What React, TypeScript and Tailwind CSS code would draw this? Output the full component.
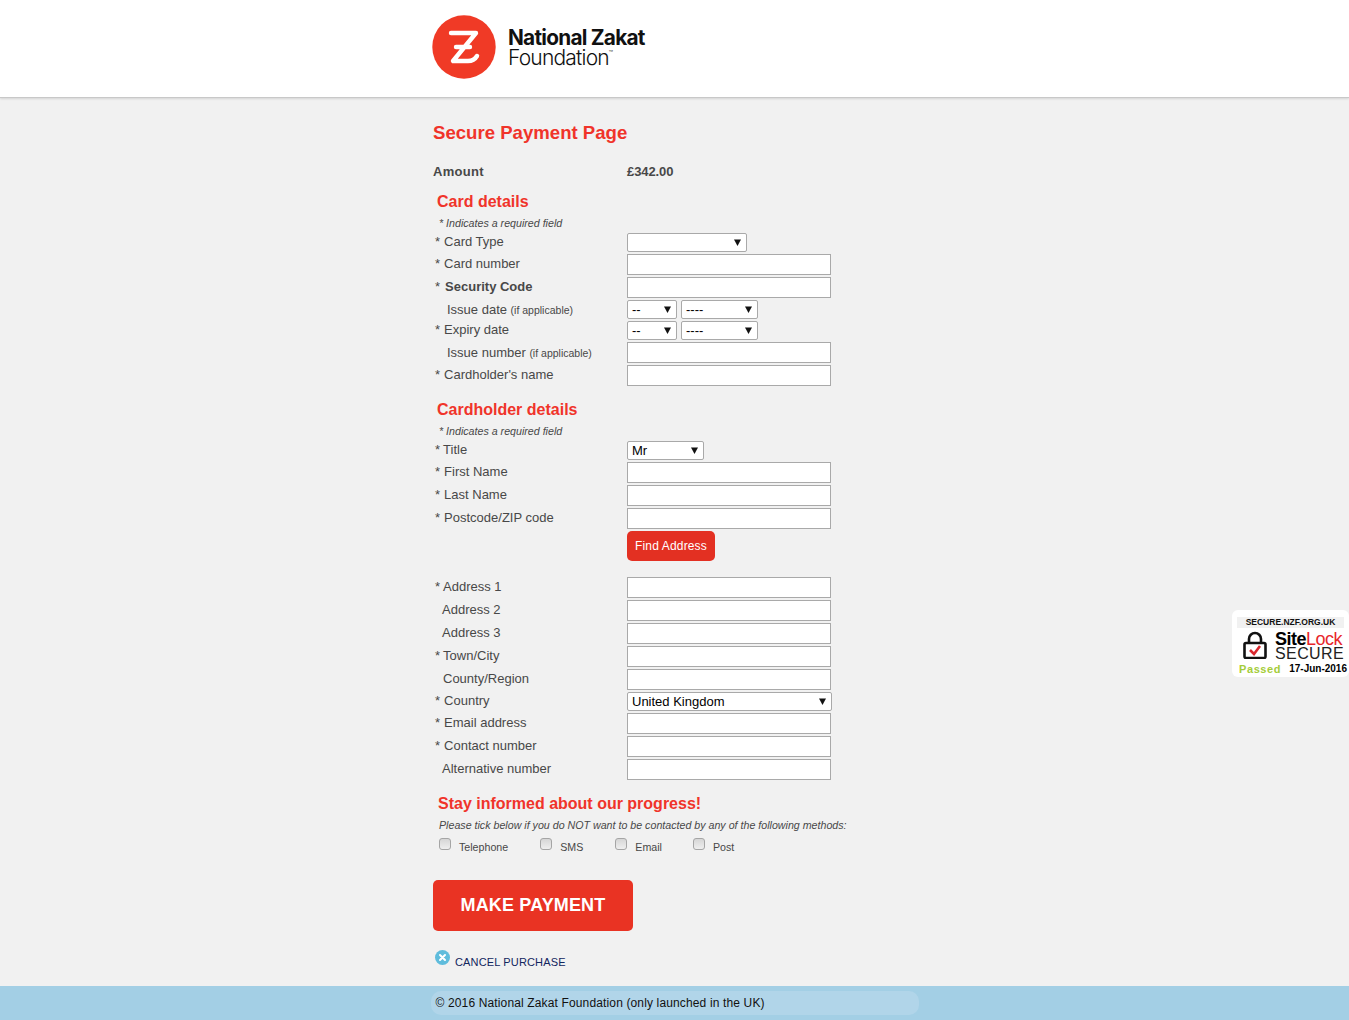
import type { ReactNode } from "react"

const arial = "font-['Liberation_Sans',Arial,sans-serif]"

function Logo() {
  return (
    <div className="-ml-px flex items-center gap-[12px]">
      <svg width="64" height="64" viewBox="0 0 64 64" className="shrink-0">
        <circle cx="32" cy="32" r="31.7" fill="#f03a26" />
        <path
          d="M19 18 H44 L21 46 H36 Q42 46 45 41 M24 32 H38"
          fill="none"
          stroke="#fff"
          strokeWidth="4.4"
          strokeLinecap="round"
          strokeLinejoin="round"
        />
      </svg>
      <div className="pt-[2px] font-['Inter',sans-serif] text-[#111]">
        <div className="text-[20.8px] leading-[19px] font-bold tracking-[-0.75px]">National Zakat</div>
        <div className="flex items-start text-[21px] leading-[21px] font-light tracking-[-0.8px]">
          Foundation<span className="mt-[3px] text-[7px] leading-[7px] tracking-normal">™</span>
        </div>
      </div>
    </div>
  )
}

function Row({ label, tight, children }: { label: ReactNode; tight?: boolean; children: ReactNode }) {
  return (
    <div className="flex items-start">
      <div className={`w-[194px] text-[13px] leading-[16px] text-[#484848] ${tight ? "pt-px" : "pt-[2px]"}`}>{label}</div>
      {children}
    </div>
  )
}

function TextBox() {
  return <input type="text" className="block h-[21px] w-[204px] border border-[#a9a9a9] bg-white" />
}

function Dropdown({ width, value }: { width: string; value: string }) {
  return (
    <div className={`flex h-[19px] items-center justify-between rounded-[2px] border border-[#a9a9a9] bg-white pr-[5px] pl-1 ${width}`}>
      <span className="text-[13px] leading-[17px] text-black">{value}</span>
      <svg width="7" height="7" viewBox="0 0 7 7">
        <path d="M0 0.5 H7 L3.5 7 Z" fill="#111" />
      </svg>
    </div>
  )
}

function Star({ text, gap = "pl-[4px]" }: { text: ReactNode; gap?: string }) {
  return (
    <div className="flex pl-[2px]">
      <span>*</span>
      <span className={gap}>{text}</span>
    </div>
  )
}

function Section({ title, top }: { title: string; top: string }) {
  return (
    <>
      <h2 className={`${top} pl-[4px] text-[16px] leading-[20px] font-bold text-[#f0342a]`}>{title}</h2>
      <p className="mt-[4px] mb-[2px] pl-[6px] text-[10.67px] leading-[15px] text-[#484848] italic">* Indicates a required field</p>
    </>
  )
}

function Tick({ label, gap }: { label: string; gap: string }) {
  return (
    <label className={`flex items-start ${gap}`}>
      <input
        type="checkbox"
        className="h-[12px] w-[12px] appearance-none rounded-[3px] border border-[#a5a5a5] bg-gradient-to-b from-[#d6d6d6] to-[#efefef]"
      />
      <span className="mt-[3px] ml-[8px] text-[10.67px] leading-[13px] text-[#484848]">{label}</span>
    </label>
  )
}

function SiteLock() {
  return (
    <div className="absolute top-[610px] right-0 h-[67px] w-[117px] rounded-[6px] bg-white">
      <div className="mx-[5px] mt-[7px] h-[11px] bg-[#f1f1f1] text-center text-[8.5px] leading-[11px] font-bold text-[#111]">
        SECURE.NZF.ORG.UK
      </div>
      <div className="mt-[3px] flex pl-[11px]">
        <svg width="24" height="28" viewBox="0 0 24 28">
          <path d="M6 12 V8 A6 6 0 0 1 18 8 V12" fill="none" stroke="#111" strokeWidth="2.6" />
          <rect x="1.5" y="12" width="21" height="15" rx="1.5" fill="#fff" stroke="#111" strokeWidth="2.6" />
          <path d="M7 19 L11 23 L17 15" fill="none" stroke="#d9272e" strokeWidth="2.6" />
        </svg>
        <div className="mt-px ml-[8px]">
          <div className="text-[18px] leading-[15px] font-bold tracking-[-0.5px] text-black">
            Site<span className="font-normal text-[#e8262a]">Lock</span>
          </div>
          <div className="text-[16px] leading-[14px] tracking-[0.4px] text-[#222]">SECURE</div>
        </div>
      </div>
      <div className="mt-[2px] flex items-center justify-between pr-[2px] pl-[7px]">
        <span className="text-[11px] leading-[12px] font-bold tracking-[0.6px] text-[#a5cd39]">Passed</span>
        <span className="text-[10px] leading-[12px] font-bold text-black">17-Jun-2016</span>
      </div>
    </div>
  )
}

export default function App() {
  return (
    <div className={`relative flex min-h-[1020px] flex-col bg-[#f1f1f1] ${arial}`}>
      <header className="h-[98px] border-b border-[#c8c8c8] bg-white shadow-[0_1px_2px_rgba(0,0,0,0.12)]">
        <div className="mx-auto w-[483px] pt-[15px]">
          <Logo />
        </div>
      </header>

      <main className="mx-auto w-[483px] flex-1">
        <h1 className="mt-[23px] text-[18.6px] leading-[24px] font-bold text-[#f0342a]">Secure Payment Page</h1>
        <div className="mt-[19px] flex text-[13px] leading-[16px] font-bold text-[#484848]">
          <div className="w-[194px] tracking-[0.3px]">Amount</div>
          <div className="tracking-[-0.1px]">£342.00</div>
        </div>

        <Section title="Card details" top="mt-[12px]" />
        <div className="flex flex-col gap-[2px]">
          <Row tight label={<Star text="Card Type" />}><Dropdown width="w-[120px]" value="" /></Row>
          <Row label={<Star text="Card number" />}><TextBox /></Row>
          <Row label={<Star text={<b>Security Code</b>} gap="pl-[5px]" />}><TextBox /></Row>
          <Row label={<div className="pl-[14px]">Issue date <span className="text-[10.5px]">(if applicable)</span></div>}>
            <div className="flex gap-[4px]">
              <Dropdown width="w-[50px]" value="--" />
              <Dropdown width="w-[77px]" value="----" />
            </div>
          </Row>
          <Row tight label={<Star text="Expiry date" />}>
            <div className="flex gap-[4px]">
              <Dropdown width="w-[50px]" value="--" />
              <Dropdown width="w-[77px]" value="----" />
            </div>
          </Row>
          <Row label={<div className="pt-px pl-[14px]">Issue number <span className="text-[10.5px]">(if applicable)</span></div>}><TextBox /></Row>
          <Row label={<Star text="Cardholder's name" />}><TextBox /></Row>
        </div>

        <Section title="Cardholder details" top="mt-[14px]" />
        <div className="flex flex-col gap-[2px]">
          <Row tight label={<Star text="Title" gap="pl-[3px]" />}><Dropdown width="w-[77px]" value="Mr" /></Row>
          <Row label={<Star text="First Name" />}><TextBox /></Row>
          <Row label={<Star text="Last Name" />}><TextBox /></Row>
          <Row label={<Star text="Postcode/ZIP code" />}><TextBox /></Row>
          <Row label="">
            <button className="h-[30px] w-[88px] rounded-[5px] bg-[#e33022] text-[12px] font-normal tracking-[0.15px] text-white">Find Address</button>
          </Row>
        </div>
        <div className="mt-[16px] flex flex-col gap-[2px]">
          <Row label={<Star text="Address 1" gap="pl-[3px]" />}><TextBox /></Row>
          <Row label={<div className="pl-[9px]">Address 2</div>}><TextBox /></Row>
          <Row label={<div className="pl-[9px]">Address 3</div>}><TextBox /></Row>
          <Row label={<Star text="Town/City" gap="pl-[3px]" />}><TextBox /></Row>
          <Row label={<div className="pl-[10px]">County/Region</div>}><TextBox /></Row>
          <Row tight label={<Star text="Country" />}><Dropdown width="w-[205px]" value="United Kingdom" /></Row>
          <Row label={<Star text="Email address" />}><TextBox /></Row>
          <Row label={<Star text="Contact number" />}><TextBox /></Row>
          <Row label={<div className="pl-[9px]">Alternative number</div>}><TextBox /></Row>
        </div>

        <h2 className="mt-[14px] pl-[5px] text-[16px] leading-[20px] font-bold text-[#f0342a]">Stay informed about our progress!</h2>
        <p className="mt-[4px] pl-[6px] text-[10.67px] leading-[15px] whitespace-nowrap text-[#484848] italic">
          Please tick below if you do NOT want to be contacted by any of the following methods:
        </p>
        <div className="mt-[5px] flex pl-[6px]">
          <Tick label="Telephone" gap="mr-[32px]" />
          <Tick label="SMS" gap="mr-[32px]" />
          <Tick label="Email" gap="mr-[31px]" />
          <Tick label="Post" gap="" />
        </div>

        <button className="mt-[26px] block h-[51px] w-[200px] rounded-[5px] bg-[#e93323] text-[18px] font-bold tracking-[0.15px] text-white">MAKE PAYMENT</button>

        <div className="mt-[19px] flex items-start pl-[2px]">
          <svg width="15" height="15" viewBox="0 0 15 15" className="shrink-0">
            <circle cx="7.5" cy="7.5" r="7.5" fill="#5fbcdc" />
            <path d="M5 5 L10 10 M10 5 L5 10" stroke="#fff" strokeWidth="2" strokeLinecap="round" />
          </svg>
          <a className="mt-[6px] ml-[5px] text-[11px] leading-[13px] font-normal tracking-[0.15px] text-[#12265e]">CANCEL PURCHASE</a>
        </div>
      </main>

      <footer className="h-[34px] bg-[#a3cfe5] pt-[5px]">
        <div className="mx-auto h-[24px] w-[488px] rounded-[10px] bg-[#b1d5e9] pl-[5px] text-[12px] leading-[24px] tracking-[0.14px] text-[#111]">
          © 2016 National Zakat Foundation (only launched in the UK)
        </div>
      </footer>

      <SiteLock />
    </div>
  )
}
